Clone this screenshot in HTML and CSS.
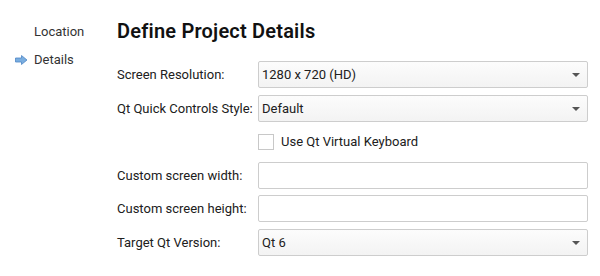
FILE: index.html
```html
<!DOCTYPE html>
<html lang="en">
<head>
    <meta charset="UTF-8">
    <title>Define Project Details</title>
    <link rel="stylesheet" href="styles.css">
</head>
<body>

<!-- wizard steps on the left -->
<ul class="steps">
    <li class="step">Location</li>
    <li class="step current">
        <svg class="step-arrow" width="13" height="10" viewBox="0 0 13 10">
            <path d="M0.5 3 H6.5 V0.5 L12 5 L6.5 9.5 V7 H0.5 Z" fill="#7aaee0" stroke="#4f86c6" stroke-width="0.8"/>
        </svg>
        Details
    </li>
</ul>

<div class="page">
    <h1>Define Project Details</h1>

    <div class="form">
        <label>Screen Resolution:</label>
        <div class="combo">1280 x 720 (HD)</div>

        <label>Qt Quick Controls Style:</label>
        <div class="combo">Default</div>

        <span></span>
        <div class="check"><span class="box"></span>Use Qt Virtual Keyboard</div>

        <label>Custom screen width:</label>
        <div class="field"></div>

        <label>Custom screen height:</label>
        <div class="field"></div>

        <label>Target Qt Version:</label>
        <div class="combo">Qt 6</div>
    </div>
</div>

</body>
</html>
```

FILE: styles.css
```css
body {
    margin: 0;
    display: flex;
    background-color: #ffffff;
    color: #202020;
    font-family: Roboto, "Liberation Sans", sans-serif;
    font-size: 13px;
}

.steps {
    list-style: none;
    margin: 0;
    padding: 18px 0 0 0;
    width: 117px;
}

.step {
    position: relative;
    height: 28px;
    line-height: 28px;
    padding-left: 34px;
    color: #333;
}

.step-arrow {
    position: absolute;
    left: 15px;
    top: 9px;
}

.page {
    flex: 1;
    padding: 0 12px 0 0;
}

h1 {
    margin: 19px 0 18px 0;
    font-size: 20px;
    font-weight: 600;
    letter-spacing: 0.2px;
    line-height: 24px;
    color: #111;
}

.form {
    display: grid;
    grid-template-columns: 141px 1fr;
    grid-auto-rows: 27px;
    row-gap: 6.5px;
    align-items: center;
}

.form label {
    white-space: nowrap;
}

.combo, .field {
    box-sizing: border-box;
    height: 27px;
    border: 1px solid #cdcdcd;
    border-radius: 2px;
    background-color: #fff;
}

.combo {
    position: relative;
    padding-left: 3px;
    line-height: 25px;
    background: linear-gradient(#fcfcfc, #f3f3f3);
}

.combo::after {
    content: "";
    position: absolute;
    right: 7px;
    top: 11px;
    border-left: 4px solid transparent;
    border-right: 4px solid transparent;
    border-top: 4px solid #555;
}

.check {
    display: flex;
    align-items: center;
}

.check .box {
    box-sizing: border-box;
    width: 16px;
    height: 16px;
    border: 1px solid #c8c8c8;
    background-color: #fff;
    margin-right: 7px;
}
```
